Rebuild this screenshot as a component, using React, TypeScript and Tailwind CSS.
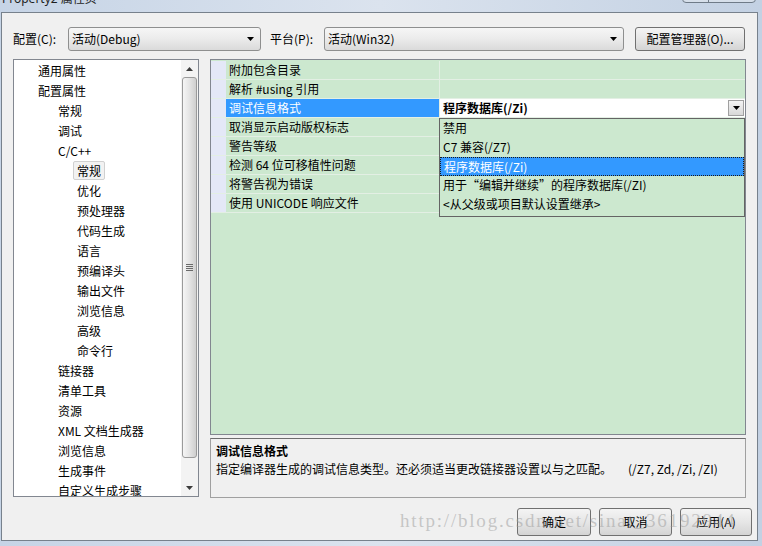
const font = "font-['Noto_Sans_CJK_SC',sans-serif]";

const treeItems: { label: string; level: number; selected?: boolean }[] = [
  { label: "通用属性", level: 1 },
  { label: "配置属性", level: 1 },
  { label: "常规", level: 2 },
  { label: "调试", level: 2 },
  { label: "C/C++", level: 2 },
  { label: "常规", level: 3, selected: true },
  { label: "优化", level: 3 },
  { label: "预处理器", level: 3 },
  { label: "代码生成", level: 3 },
  { label: "语言", level: 3 },
  { label: "预编译头", level: 3 },
  { label: "输出文件", level: 3 },
  { label: "浏览信息", level: 3 },
  { label: "高级", level: 3 },
  { label: "命令行", level: 3 },
  { label: "链接器", level: 2 },
  { label: "清单工具", level: 2 },
  { label: "资源", level: 2 },
  { label: "XML 文档生成器", level: 2 },
  { label: "浏览信息", level: 2 },
  { label: "生成事件", level: 2 },
  { label: "自定义生成步骤", level: 2 },
];

// left edge of the item box; text sits 4px further in
const indent: Record<number, string> = {
  1: "pl-[20px]",
  2: "pl-[40px]",
  3: "pl-[59px]",
};

const rows = [
  "附加包含目录",
  "解析 #using 引用",
  "调试信息格式",
  "取消显示启动版权标志",
  "警告等级",
  "检测 64 位可移植性问题",
  "将警告视为错误",
  "使用 UNICODE 响应文件",
];

const options = [
  "禁用",
  "C7 兼容(/Z7)",
  "程序数据库(/Zi)",
  "用于“编辑并继续”的程序数据库(/ZI)",
  "<从父级或项目默认设置继承>",
];

const Arrow = ({ up, color = "#000" }: { up?: boolean; color?: string }) => (
  <svg width="7" height="4" viewBox="0 0 7 4">
    <path d={up ? "M3.5 0L7 4H0z" : "M0 0h7L3.5 4z"} fill={color} />
  </svg>
);

const Combo = ({ text, width }: { text: string; width: string }) => (
  <div
    className={`flex h-[24px] items-center justify-between rounded-[3px] border border-[#8e8f8f] bg-gradient-to-b from-[#f6f6f6] via-[#ebebeb] to-[#dadada] pl-[3px] pr-[6px] ${width}`}
  >
    <span>{text}</span>
    <Arrow />
  </div>
);

const Button = ({ text, width }: { text: string; width: string }) => (
  <div
    className={`flex h-[28px] items-center justify-center rounded-[3px] border border-[#707070] bg-gradient-to-b from-[#f4f4f4] via-[#e6e6e6] to-[#d4d4d4] ${width}`}
  >
    {text}
  </div>
);

export default function App() {
  return (
    <div
      className={`relative h-[546px] w-[762px] overflow-hidden bg-gradient-to-r from-[#c6d4e6] via-[#dbe3ee] to-[#c3d1e3] text-[12px] leading-[18px] text-black ${font}`}
    >
      {/* title bar (cut off at the top) */}
      <div className="relative h-[12px] overflow-hidden">
        <div className="absolute left-[2px] top-[-9px] font-['Noto_Sans','Noto_Sans_CJK_SC',sans-serif] text-[12px] leading-[16px] text-[#1e1e1e]">
          Property2 属性页
        </div>
        <div className="absolute left-[682px] top-[-20px] flex h-[23px] w-[74px] rounded-b-[4px] border border-[#6f7b88] bg-[#d6dfea]">
          <div className="w-[26px] border-r border-[#6f7b88]" />
        </div>
      </div>

      {/* dialog body */}
      <div className="ml-[1px] flex h-[529px] w-[757px] flex-col border border-[#77818c] bg-[#f0f0f0] pl-[11px] pr-[8px] pt-[14px]">
        <div className="flex h-[24px] items-center">
          <span className="w-[55px]">配置(C):</span>
          <Combo text="活动(Debug)" width="w-[193px]" />
          <span className="ml-[9px] w-[54px]">平台(P):</span>
          <Combo text="活动(Win32)" width="w-[300px]" />
          <div className="ml-[11px]">
            <div className="flex h-[24px] w-[110px] items-center justify-center rounded-[3px] border border-[#707070] bg-gradient-to-b from-[#f4f4f4] via-[#e6e6e6] to-[#d4d4d4]">
              配置管理器(O)...
            </div>
          </div>
        </div>

        <div className="mt-[8px] flex h-[439px] items-start gap-[11px]">
          {/* tree */}
          <div className="flex h-[438px] w-[186px] border border-[#828790] bg-white">
            <div className="flex-1 overflow-hidden">
              {treeItems.map((item, i) => (
                <div key={i} className={`flex h-[20px] items-center ${indent[item.level]}`}>
                  <span
                    className={`rounded-[2px] border px-[3px] leading-[17px] ${item.selected ? "border-[#d0d0d0] bg-[#f2f2f2]" : "border-transparent"}`}
                  >
                    {item.label}
                  </span>
                </div>
              ))}
            </div>
            <div className="flex w-[17px] flex-col bg-[#f3f3f3]">
              <div className="flex h-[17px] items-center justify-center">
                <Arrow up color="#3c3c3c" />
              </div>
              <div className="mx-[1px] flex h-[381px] items-center justify-center rounded-[3px] border border-[#9a9a9a] bg-gradient-to-r from-[#f5f5f5] via-[#e4e4e4] to-[#cfcfcf]">
                <div className="flex w-[7px] flex-col gap-[1px]">
                  <div className="h-[1px] bg-[#6a6a6a]" />
                  <div className="h-[1px] bg-[#6a6a6a]" />
                  <div className="h-[1px] bg-[#6a6a6a]" />
                  <div className="h-[1px] bg-[#6a6a6a]" />
                </div>
              </div>
              <div className="flex-1" />
              <div className="flex h-[17px] items-center justify-center">
                <Arrow color="#3c3c3c" />
              </div>
            </div>
          </div>

          {/* property grid + description */}
          <div className="flex w-[536px] flex-col gap-[3px]">
            <div className="relative h-[376px] border border-[#828790] bg-[#cce8cf]">
              <div className="pt-[1px]">
                {rows.map((name, i) => {
                  const sel = i === 2;
                  return (
                    <div key={name} className="flex h-[19px] border-b border-[#e3efe4]">
                      <div className="w-[15px] bg-[#e4e8f7]" />
                      <div
                        className={`w-[214px] border-r border-[#e3efe4] pl-[3px] ${sel ? "bg-[#3399ff] text-white" : ""}`}
                      >
                        {name}
                      </div>
                      <div className={`flex flex-1 items-center justify-between ${sel ? "bg-white" : ""}`}>
                        {sel && (
                          <>
                            <span className="pl-[3px] font-bold">程序数据库(/Zi)</span>
                            <div className="mr-[1px] flex h-[16px] w-[16px] items-center justify-center border border-[#a0a0a0] bg-gradient-to-b from-[#f4f4f4] to-[#d8d8d8]">
                              <Arrow />
                            </div>
                          </>
                        )}
                      </div>
                    </div>
                  );
                })}
              </div>

              {/* open dropdown list */}
              <div className="absolute left-[228px] top-[58px] h-[99px] w-[306px] border border-[#646464] bg-[#cce8cf]">
                {options.map((opt, i) => (
                  <div
                    key={opt}
                    className={`h-[19px] pl-[3px] ${i === 2 ? "border border-dotted border-[#1a1a1a] bg-[#3399ff] pl-[2px] leading-[17px] text-white" : ""}`}
                  >
                    {opt}
                  </div>
                ))}
              </div>
            </div>

            <div className="h-[60px] border border-[#a0a0a0] border-t-[#6d6d6d] bg-[#f0f0f0] pl-[5px] pt-[3px]">
              <div className="font-bold">调试信息格式</div>
              <div className="flex">
                <span>指定编译器生成的调试信息类型。还必须适当更改链接器设置以与之匹配。</span>
                <span className="ml-[16px]">(/Z7, Zd, /Zi, /ZI)</span>
              </div>
            </div>
          </div>
        </div>

        <div className="mr-[-3px] mt-[10px] flex justify-end gap-[8px]">
          <Button text="确定" width="w-[74px]" />
          <Button text="取消" width="w-[73px]" />
          <Button text="应用(A)" width="w-[72px]" />
        </div>
      </div>

      {/* watermark */}
      <div className="pointer-events-none absolute left-[400px] top-[509px] font-['Liberation_Serif',serif] text-[19px] leading-[24px] tracking-[1.8px] text-[#9a9a9a80]">
        http://blog.csdn.net/sinat_36192944
      </div>
    </div>
  );
}
